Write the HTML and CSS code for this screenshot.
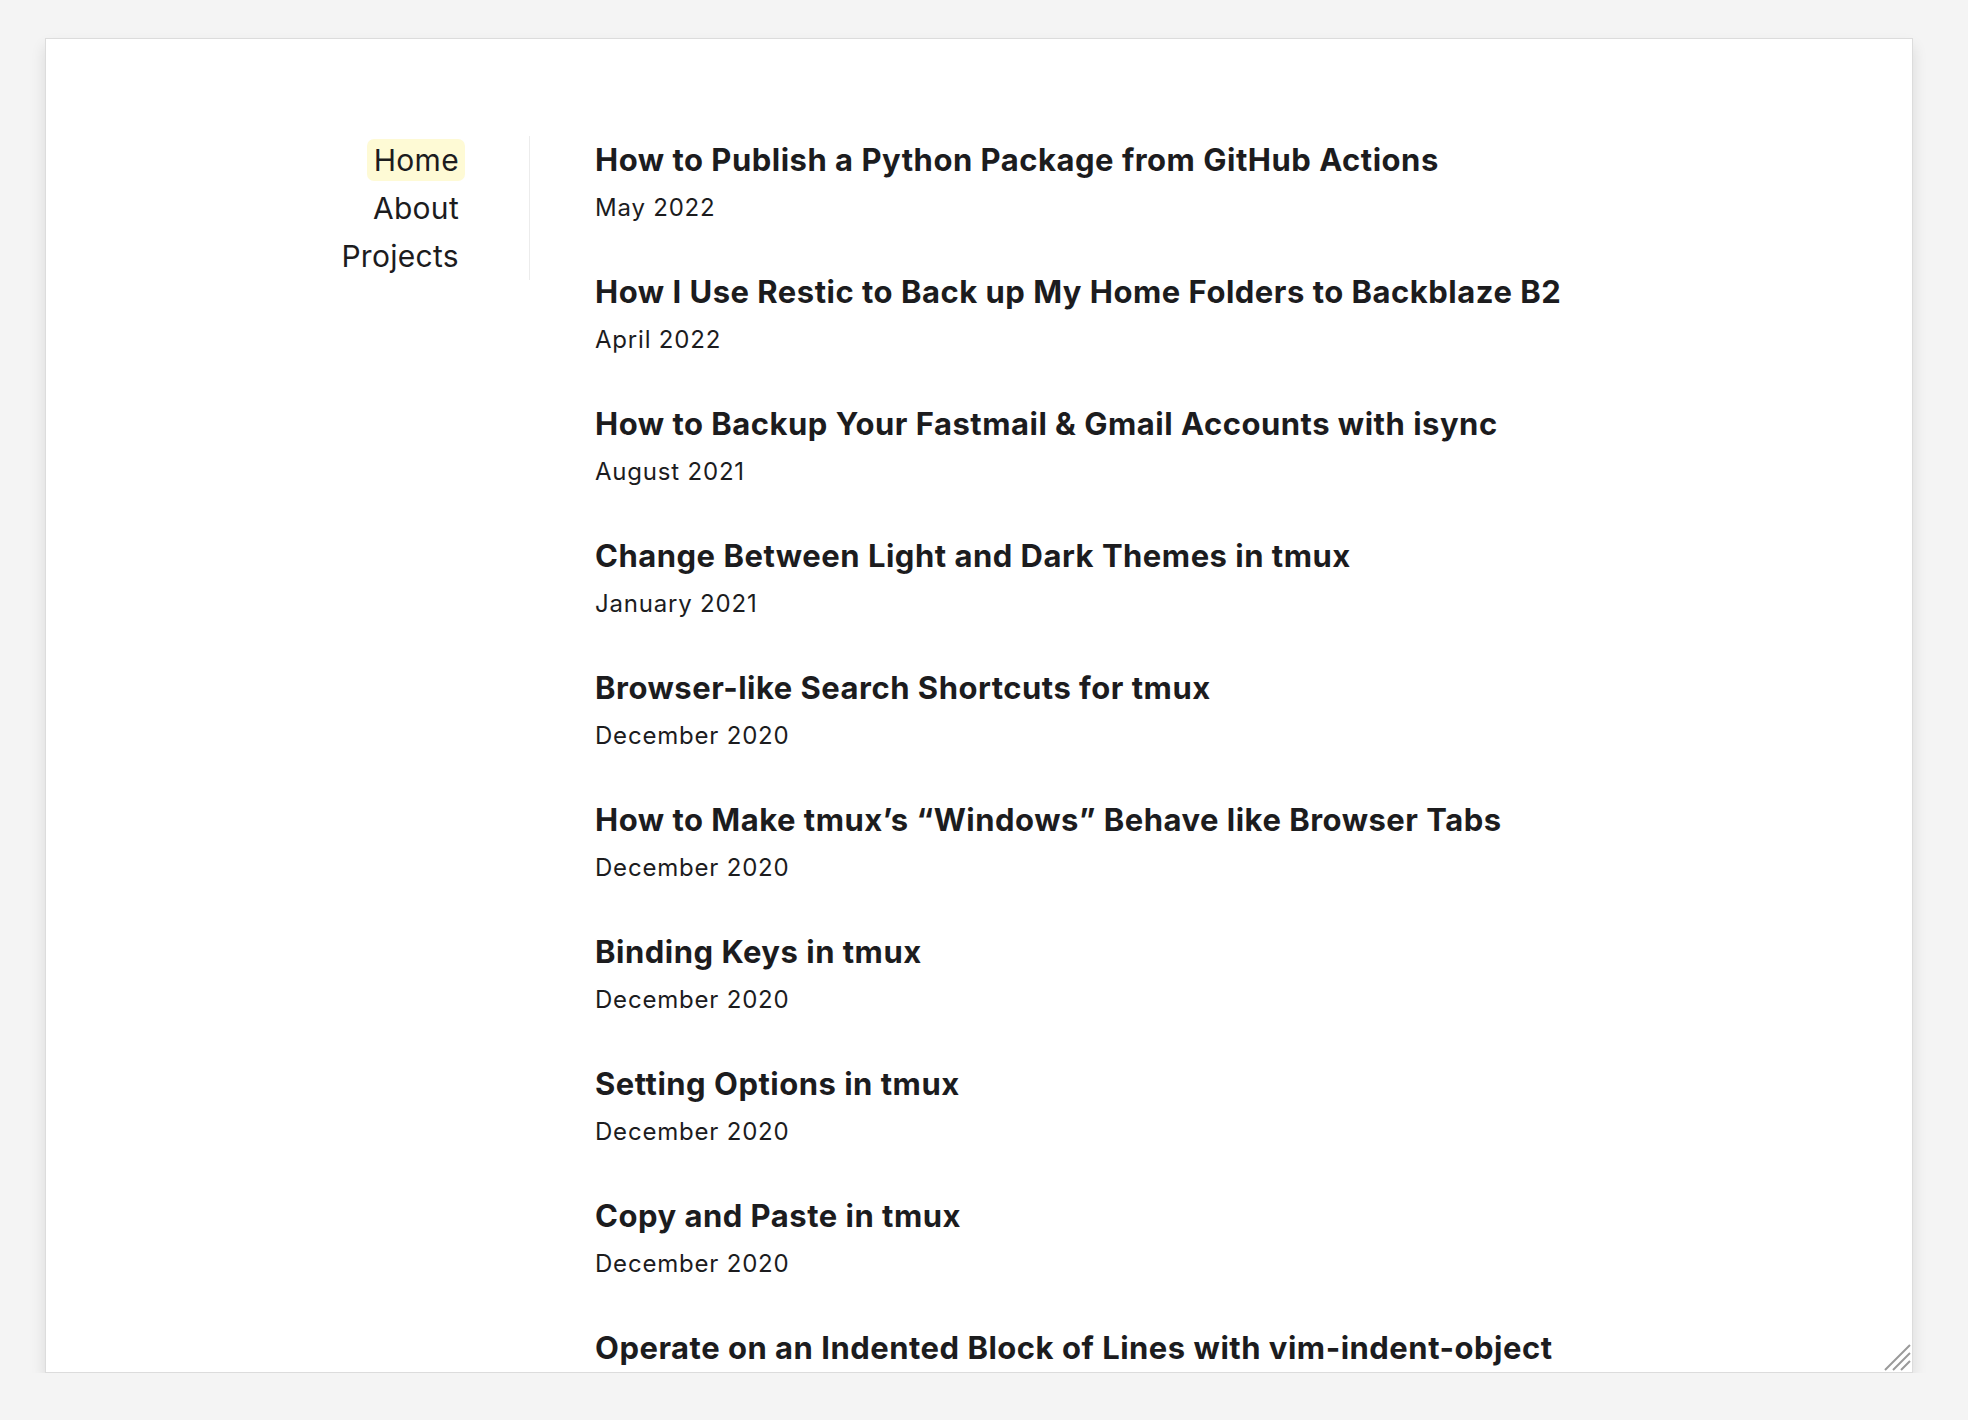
FILE: index.html
```html
<!DOCTYPE html>
<html lang="en">
<head>
<meta charset="utf-8">
<title>Blog</title>
<link rel="stylesheet" href="styles.css">
</head>
<body>
<div class="frame">
  <div class="page">
    <nav class="nav">
      <a class="nav-link active" href="#">Home</a>
      <a class="nav-link" href="#">About</a>
      <a class="nav-link" href="#">Projects</a>
    </nav>
    <main class="posts">
      <article class="post"><h2 class="post-title">How to Publish a Python Package from GitHub Actions</h2><p class="post-date">May 2022</p></article>
      <article class="post"><h2 class="post-title">How I Use Restic to Back up My Home Folders to Backblaze B2</h2><p class="post-date">April 2022</p></article>
      <article class="post"><h2 class="post-title">How to Backup Your Fastmail &amp; Gmail Accounts with isync</h2><p class="post-date">August 2021</p></article>
      <article class="post"><h2 class="post-title">Change Between Light and Dark Themes in tmux</h2><p class="post-date">January 2021</p></article>
      <article class="post"><h2 class="post-title">Browser-like Search Shortcuts for tmux</h2><p class="post-date">December 2020</p></article>
      <article class="post"><h2 class="post-title">How to Make tmux’s “Windows” Behave like Browser Tabs</h2><p class="post-date">December 2020</p></article>
      <article class="post"><h2 class="post-title">Binding Keys in tmux</h2><p class="post-date">December 2020</p></article>
      <article class="post"><h2 class="post-title">Setting Options in tmux</h2><p class="post-date">December 2020</p></article>
      <article class="post"><h2 class="post-title">Copy and Paste in tmux</h2><p class="post-date">December 2020</p></article>
      <article class="post"><h2 class="post-title">Operate on an Indented Block of Lines with vim-indent-object</h2><p class="post-date">November 2020</p></article>
    </main>
  </div>
  <svg class="resize-grip" width="28" height="28" viewBox="0 0 28 28" aria-hidden="true">
    <path d="M2 27 L27 2 M10 27 L27 10 M18 27 L27 18" stroke="#9a9a9a" stroke-width="2" fill="none"/>
  </svg>
</div>
</body>
</html>
```

FILE: styles.css
```css
html, body {
  margin: 0;
  padding: 0;
  background: #f4f4f4;
}
body {
  padding: 38px 55px 0 45px;
  font-family: Inter, "Noto Sans", sans-serif;
  color: #1c1c1e;
}
.frame {
  position: relative;
  height: 1335px;
  box-sizing: border-box;
  background: #fff;
  border: 1px solid #dcdcdc;
  box-shadow: 0 8px 14px rgba(0, 0, 0, 0.11);
  overflow: hidden;
}
.page {
  display: flex;
  align-items: flex-start;
  padding-top: 97px;
}
.nav {
  width: 419px;
  padding-right: 64px;
  border-right: 1px solid #ececec;
  display: flex;
  flex-direction: column;
  align-items: flex-end;
}
.nav-link {
  display: block;
  margin: 3px 0;
  font-size: 30px;
  line-height: 42px;
  letter-spacing: 0.3px;
  color: #1c1c1e;
  text-decoration: none;
  padding: 0 6px 0 7px;
  border-radius: 7px;
}
.nav-link.active {
  background: #fefad5;
}
.posts {
  padding-left: 65px;
}
.post {
  margin-bottom: 36px;
}
.post-title {
  margin: 0;
  font-size: 31px;
  line-height: 48px;
  font-weight: 700;
  letter-spacing: 0.5px;
}
.post-date {
  margin: 0;
  font-size: 24px;
  line-height: 48px;
  letter-spacing: 0.8px;
}
.resize-grip {
  position: absolute;
  right: 1px;
  bottom: 1px;
}
```
